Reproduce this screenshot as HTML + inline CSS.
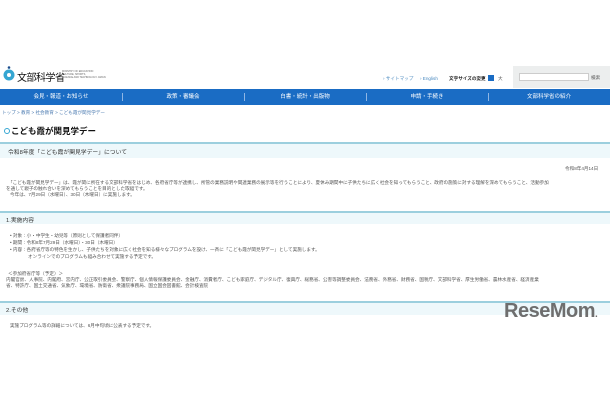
<!DOCTYPE html>
<html><head><meta charset="utf-8"><style>
*{margin:0;padding:0;box-sizing:border-box}
body{width:610px;height:400px;background:#fff;position:relative;overflow:hidden;font-family:"Liberation Sans","Noto Sans CJK JP",sans-serif;color:#333}
.a{position:absolute;white-space:nowrap}
.s{font-size:4.6px;color:#555}
.nav{position:absolute;left:0;top:89px;width:610px;height:16px;background:#1a6cc4;display:flex}
.nav div{flex:1;color:#fff;font-size:5.5px;text-align:center;line-height:16px;position:relative}
.nav div+div:before{content:"";position:absolute;left:0;top:4px;height:8px;border-left:1px solid #8fb6e4}
.box{position:absolute;left:0;width:610px;background:#eef8fb;border-top:2px solid #9ccfde}
</style></head><body>
<svg class="a" style="left:2px;top:66px" width="14" height="16"><circle cx="7" cy="1.5" r="1.3" fill="#1a4a8c"/><circle cx="7" cy="9" r="5.5" fill="#35a6d2"/><circle cx="7" cy="9" r="2" fill="#fff"/></svg>
<div class="a" style="left:17px;top:69px;font-size:10px;color:#111;letter-spacing:-0.5px">文部科学省</div>
<div class="a" style="left:62px;top:70px;font-size:2.5px;color:#666;line-height:3px">MINISTRY OF EDUCATION<br>CULTURE, SPORTS,<br>SCIENCE AND TECHNOLOGY JAPAN</div>
<div class="a s" style="left:383px;top:76px;color:#4a8ac0">› サイトマップ</div>
<div class="a s" style="left:420px;top:76px;color:#4a8ac0">› English</div>
<div class="a s" style="left:449px;top:76px;color:#222;font-weight:bold">文字サイズの変更</div>
<div class="a s" style="left:480px;top:76px">小</div>
<div class="a" style="left:488px;top:75px;width:6px;height:6px;background:#1a6cc4"></div>
<div class="a s" style="left:498px;top:76px">大</div>
<div class="a" style="left:513px;top:66px;width:97px;height:22px;background:#eceeee"></div>
<div class="a" style="left:519px;top:73px;width:70px;height:8px;background:#fff;border:1px solid #ccc"></div>
<div class="a s" style="left:591px;top:75px">検索</div>
<div class="nav"><div>会見・報道・お知らせ</div><div>政策・審議会</div><div>白書・統計・出版物</div><div>申請・手続き</div><div>文部科学省の紹介</div></div>
<div class="a s" style="left:2px;top:110px;color:#4a7ab0">トップ &gt; 教育 &gt; 社会教育 &gt; こども霞が関見学デー</div>
<div class="a" style="left:4px;top:128px;width:6px;height:6px;border-radius:50%;border:1.6px solid #35a6d2"></div>
<div class="a" style="left:11px;top:125px;font-size:8.5px;color:#111;font-weight:bold">こども霞が関見学デー</div>
<div class="box" style="top:142px;height:16px"></div>
<div class="a" style="left:8px;top:147px;font-size:5.8px;color:#333">令和8年度「こども霞が関見学デー」について</div>
<div class="a s" style="left:565px;top:166px">令和8年4月14日</div>
<div class="a s" style="left:8px;top:180px">「こども霞が関見学デー」は、霞が関に所在する文部科学省をはじめ、各府省庁等が連携し、所管の業務説明や関連業務の展示等を行うことにより、夏休み期間中に子供たちに広く社会を知ってもらうこと、政府の施策に対する理解を深めてもらうこと、活動参加</div>
<div class="a s" style="left:6px;top:186px">を通して親子の触れ合いを深めてもらうことを目的とした取組です。</div>
<div class="a s" style="left:10px;top:192px">今年は、7月29日（水曜日）、30日（木曜日）に実施します。</div>
<div class="box" style="top:211px;height:13px"></div>
<div class="a" style="left:6px;top:215px;font-size:5.8px;color:#333">1.実施内容</div>
<div class="a s" style="left:10px;top:233px">• 対象：小・中学生・幼児等（原則として保護者同伴）</div>
<div class="a s" style="left:10px;top:240px">• 期間：令和8年7月29日（水曜日）・30日（木曜日）</div>
<div class="a s" style="left:10px;top:247px">• 内容：各府省庁等の特色を生かし、子供たちを対象に広く社会を知る様々なプログラムを設け、一斉に「こども霞が関見学デー」として実施します。</div>
<div class="a s" style="left:28px;top:254px">オンラインでのプログラムも組み合わせて実施する予定です。</div>
<div class="a s" style="left:8px;top:271px">＜参加府省庁等（予定）＞</div>
<div class="a s" style="left:6px;top:277px">内閣官房、人事院、内閣府、宮内庁、公正取引委員会、警察庁、個人情報保護委員会、金融庁、消費者庁、こども家庭庁、デジタル庁、復興庁、総務省、公害等調整委員会、法務省、外務省、財務省、国税庁、文部科学省、厚生労働省、農林水産省、経済産業</div>
<div class="a s" style="left:6px;top:283px">省、特許庁、国土交通省、気象庁、環境省、防衛省、衆議院事務局、国立国会図書館、会計検査院</div>
<div class="box" style="top:301px;height:14px"></div>
<div class="a" style="left:6px;top:305px;font-size:5.8px;color:#333">2.その他</div>
<div class="a s" style="left:10px;top:323px">実施プログラム等の詳細については、6月中旬頃に公表する予定です。</div>
<div class="a" style="left:504px;top:300px;font-size:20px;font-weight:bold;color:#6e6e6e;letter-spacing:-0.5px">ReseMom<span style="font-size:10px">.</span></div>
</body></html>
